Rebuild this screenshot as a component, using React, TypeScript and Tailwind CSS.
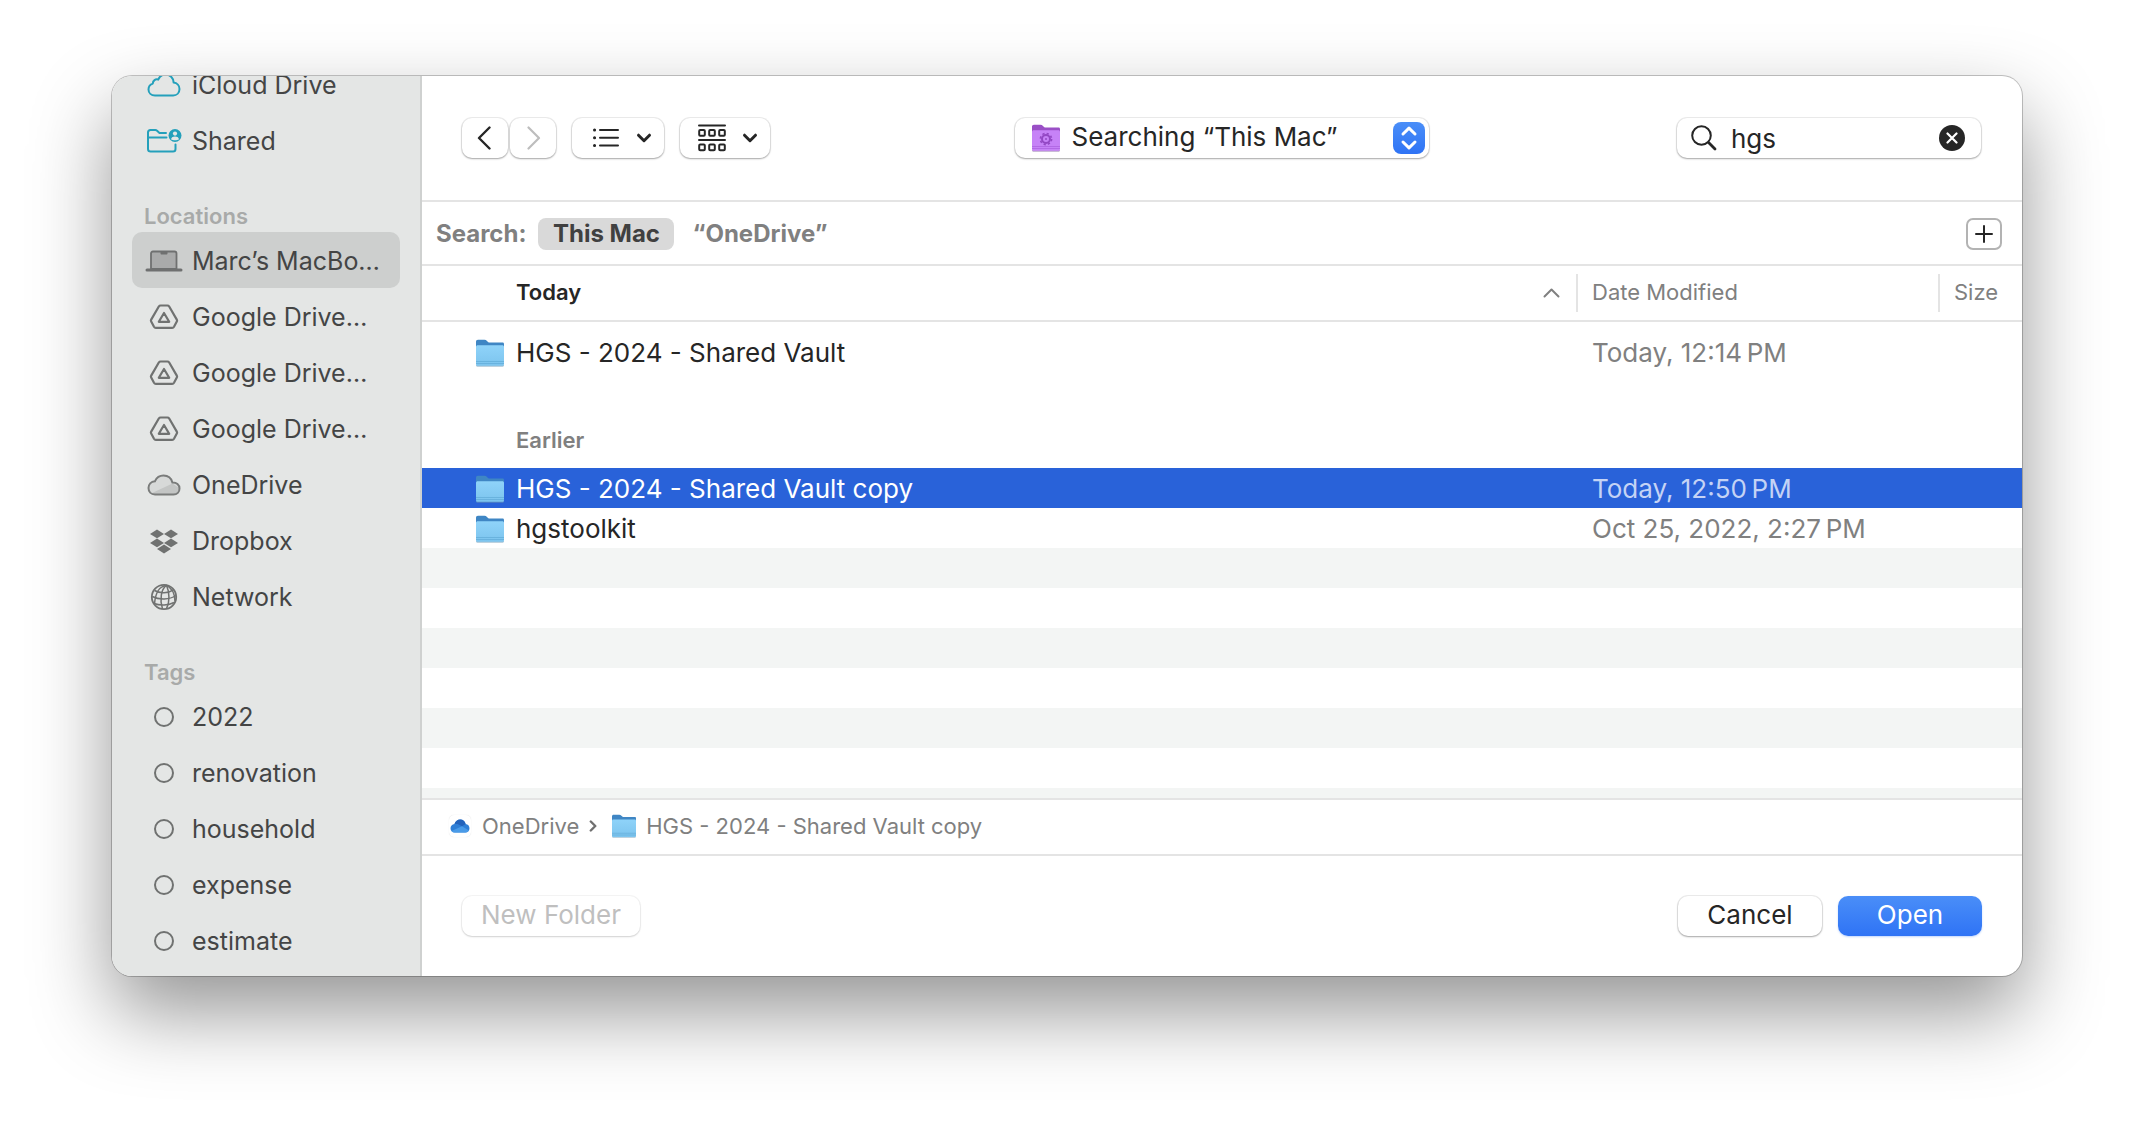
import { useId, useState } from "react";
import type { ReactNode } from "react";

type SidebarItem = { name: string; icon: ReactNode; active?: boolean };
type FileEntry = { name: string; modified: string };

function CloudOutline() {
  return (
    <svg width="34" height="24" viewBox="0 0 34 24" fill="none" stroke="#24a0bb" strokeWidth="2" strokeLinejoin="round">
      <path d="M8 22.5C4.300 22.500 1.500 20 1.500 16.500C1.500 13.500 3.500 11.300 5.800 10.600C5.800 7.600 8.600 5.600 11.200 6.600C12.600 3.300 15.300 1.500 18.500 1.500C23 1.500 26.500 5 26.600 9.600C30 10 32.500 12.600 32.500 16C32.500 19.800 29.800 22.500 26.200 22.500Z" />
    </svg>
  );
}

function SharedFolderIcon() {
  return (
    <svg width="36" height="26" viewBox="0 0 36 26" fill="none">
      <g stroke="#24a0bb" strokeWidth="2" strokeLinecap="round" strokeLinejoin="round">
        <path d="M20 5H13.500L10.800 2.500C10.400 2.100 9.900 2 9.300 2H4.500C2.800 2 2 3 2 4.500V21C2 22.800 3 23.500 4.700 23.500H27C28.700 23.500 29.500 22.700 29.500 21V16.500" />
        <path d="M2 9.500H20.500" />
      </g>
      <circle cx="29" cy="7.500" r="6.500" fill="#24a0bb" />
      <circle cx="29" cy="5.600" r="2.100" fill="#e4e6e5" />
      <path d="M25 11.200C25.500 9.300 27 8.600 29 8.600S32.500 9.300 33 11.200C31 12.700 27 12.700 25 11.200Z" fill="#e4e6e5" />
    </svg>
  );
}

function LaptopIcon() {
  return (
    <svg width="38" height="22" viewBox="0 0 38 22">
      <path d="M6 19V3.500C6 2.300 6.700 1.500 8 1.500H29.500C30.800 1.500 31.500 2.300 31.500 3.500V19Z" fill="#a9aaaa" stroke="#6f7070" strokeWidth="1.800" />
      <path d="M15.500 1.500H22.500V3.200C22.500 4.200 22 4.500 21.200 4.500H16.800C16 4.500 15.500 4.200 15.500 3.200Z" fill="#6f7070" />
      <rect x="0.500" y="18.500" width="37" height="3" rx="1.500" fill="#6f7070" />
    </svg>
  );
}

function DriveIcon() {
  return (
    <svg width="30" height="26" viewBox="0 0 30 26" fill="none" stroke="#707271" strokeWidth="2.200" strokeLinejoin="round">
      <path d="M11.600 1.500H18.400C19.200 1.500 19.800 1.900 20.200 2.500L27.800 15.600C28.200 16.300 28.200 17 27.800 17.600L25 22.800C24.600 23.500 24 23.900 23.200 23.900H6.800C6 23.900 5.400 23.500 5 22.800L2.200 17.600C1.800 17 1.800 16.300 2.200 15.600L9.800 2.500C10.200 1.900 10.800 1.500 11.600 1.500Z" />
      <path d="M15 9L20.200 17.800H9.800Z" />
    </svg>
  );
}

function OneDriveIcon() {
  return (
    <svg width="34" height="22" viewBox="0 0 34 22">
      <path d="M8 20.500C4 20.500 1.500 17.800 1.500 14C1.500 10.500 4 7.500 8 7.200C9.500 3.800 12.500 1.500 16.500 1.500C20.800 1.500 24.300 4.300 25.400 8.500C29.500 8.300 32.500 11 32.500 14.500C32.500 18 30 20.500 26.500 20.500Z" fill="#d7d9d8" />
      <path d="M4 19.500L25.500 9.500L32 14C32.300 18 29 20.500 26.500 20.500H8Z" fill="#c3c5c4" />
      <path d="M8 20.500C4 20.500 1.500 17.800 1.500 14C1.500 10.500 4 7.500 8 7.200C9.500 3.800 12.500 1.500 16.500 1.500C20.800 1.500 24.300 4.300 25.400 8.500C29.500 8.300 32.500 11 32.500 14.500C32.500 18 30 20.500 26.500 20.500Z" fill="none" stroke="#7a7c7b" strokeWidth="2" />
    </svg>
  );
}

function DropboxIcon() {
  return (
    <svg width="28" height="25" viewBox="0 0 28 25" fill="#707271">
      <path d="M7 0.500L14 4.900L7 9.300L0 4.900Z" />
      <path d="M21 0.500L28 4.900L21 9.300L14 4.900Z" />
      <path d="M7 9.500L14 13.900L7 18.300L0 13.900Z" />
      <path d="M21 9.500L28 13.900L21 18.300L14 13.900Z" />
      <path d="M14 15.600L21 20L14 24.400L7 20Z" />
    </svg>
  );
}

function GlobeIcon() {
  return (
    <svg width="28" height="28" viewBox="0 0 28 28" fill="none" stroke="#707271" strokeWidth="1.500">
      <circle cx="14" cy="14" r="12.200" strokeWidth="1.800" />
      <path d="M16.500 2.300C11 6 9.500 17 12.500 25.900" />
      <path d="M16.500 2.300C19.500 9 20 19 16.500 25.700" />
      <path d="M16.500 2.300C9 3.500 5.500 9 4.500 21" />
      <path d="M16.500 2.300C22 5 25 10.500 25 18.500" />
      <path d="M4.500 7.500C10 10.500 18 10.500 23.500 6.800" />
      <path d="M2.200 13.500C9 17 19.500 17 25.800 12.500" />
      <path d="M4 20.500C10 22.800 18.500 22.500 24 19.500" />
    </svg>
  );
}

function TagCircle() {
  return <span className="size-5 rounded-full border-2 border-[#707271]" />;
}

function FolderIcon({ small = false }: { small?: boolean }) {
  const id = useId();
  return (
    <svg className={small ? "h-6 w-[26px]" : "h-7 w-[30px]"} viewBox="0 0 30 28">
      <defs>
        <linearGradient id={id} x1="0" y1="0" x2="0" y2="1">
          <stop offset="0" stopColor="#8fd3f9" />
          <stop offset="1" stopColor="#7cc4ee" />
        </linearGradient>
      </defs>
      <path d="M1 3C1 1.500 1.700 0.800 3 0.800H9.500C10.500 0.800 11.200 1.200 12 2L13 3C13.500 3.400 14 3.600 15 3.600H27.500C28.600 3.600 29 4.200 29 5.200V14H1Z" fill="#3f86c4" />
      <path d="M1 26C1 27.300 1.800 27.800 3 27.800H27C28.200 27.800 29 27.300 29 26Z" fill="#6f9db9" opacity="0.600" />
      <path d="M1 8C1 6.800 1.700 6.300 2.800 6.300H27.200C28.300 6.300 29 6.800 29 8V25C29 26.300 28.400 26.800 27.200 26.800H2.800C1.600 26.800 1 26.300 1 25Z" fill={`url(#${id})`} />
      <path d="M1 22.500H29M1 24.500H29" stroke="#63add9" strokeWidth="0.800" />
    </svg>
  );
}

function SmartFolderIcon() {
  return (
    <svg width="30" height="28" viewBox="0 0 30 28">
      <path d="M1 3C1 1.500 1.700 0.800 3 0.800H9.500C10.500 0.800 11.200 1.200 12 2L13 3C13.500 3.400 14 3.600 15 3.600H27.500C28.600 3.600 29 4.200 29 5.200V14H1Z" fill="#9a4fc6" />
      <path d="M1 26C1 27.300 1.800 27.800 3 27.800H27C28.200 27.800 29 27.300 29 26Z" fill="#9a7fb0" opacity="0.700" />
      <path d="M1 8C1 6.800 1.700 6.300 2.800 6.300H27.200C28.300 6.300 29 6.800 29 8V25C29 26.300 28.400 26.800 27.200 26.800H2.800C1.600 26.800 1 26.300 1 25Z" fill="#c682f7" />
      <path d="M1 22.500H29M1 24.500H29" stroke="#ad63df" strokeWidth="0.800" />
      <circle cx="15" cy="15" r="4" fill="none" stroke="#9348c4" strokeWidth="2" />
      <circle cx="15" cy="15" r="5.600" fill="none" stroke="#9348c4" strokeWidth="1.600" strokeDasharray="2.200 2.198" />
      <circle cx="15" cy="15" r="1" fill="#9348c4" />
    </svg>
  );
}

function ChevronDown() {
  return (
    <svg width="16" height="10" viewBox="0 0 16 10" fill="none" stroke="#262626" strokeWidth="3" strokeLinecap="round" strokeLinejoin="round">
      <path d="M2.500 2.200L8 7.700L13.500 2.200" />
    </svg>
  );
}

const favorites: SidebarItem[] = [
  { name: "iCloud Drive", icon: <CloudOutline /> },
  { name: "Shared", icon: <SharedFolderIcon /> },
];

const locations: SidebarItem[] = [
  { name: "Marc’s MacBo…", icon: <LaptopIcon />, active: true },
  { name: "Google Drive…", icon: <DriveIcon /> },
  { name: "Google Drive…", icon: <DriveIcon /> },
  { name: "Google Drive…", icon: <DriveIcon /> },
  { name: "OneDrive", icon: <OneDriveIcon /> },
  { name: "Dropbox", icon: <DropboxIcon /> },
  { name: "Network", icon: <GlobeIcon /> },
];

const tags: SidebarItem[] = ["2022", "renovation", "household", "expense", "estimate"].map((name) => ({
  name,
  icon: <TagCircle />,
}));

const today: FileEntry[] = [{ name: "HGS - 2024 - Shared Vault", modified: "Today, 12:14\u202fPM" }];

const earlier: FileEntry[] = [
  { name: "HGS - 2024 - Shared Vault copy", modified: "Today, 12:50\u202fPM" },
  { name: "hgstoolkit", modified: "Oct 25, 2022, 2:27\u202fPM" },
];

const control =
  "flex h-10 items-center rounded-[10px] bg-white shadow-[0_0_0_1px_rgba(0,0,0,0.07),0_1px_2px_rgba(0,0,0,0.3)]";

function SidebarGroup({ title, items }: { title?: string; items: SidebarItem[] }) {
  return (
    <section>
      {title && <h2 className="mt-8 pl-3 text-[22px] leading-8 font-semibold text-[#a8aaa9]">{title}</h2>}
      <ul>
        {items.map((item, index) => (
          <li key={index}>
            <button
              type="button"
              className={`flex h-14 w-full items-center rounded-[10px] pt-0.5 pl-3 text-left ${item.active ? "bg-[#cdcfce]" : ""}`}
            >
              <span className="flex w-10 shrink-0 justify-center">{item.icon}</span>
              <span className="ml-2 whitespace-nowrap">{item.name}</span>
            </button>
          </li>
        ))}
      </ul>
    </section>
  );
}

function FileRow({ file, selected }: { file: FileEntry; selected: boolean }) {
  return (
    <tr className={`h-10 ${selected ? "bg-[#2962d9] text-white" : "text-[#262626]"}`}>
      <td className="p-0 pt-0.5 pl-[53px]">
        <div className="flex items-center gap-[11px]">
          <FolderIcon />
          {file.name}
        </div>
      </td>
      <td className={`p-0 pt-0.5 pl-4 ${selected ? "text-[#c4d3f5]" : "text-[#808080]"}`}>{file.modified}</td>
      <td className="p-0" />
    </tr>
  );
}

export default function App() {
  const [query, setQuery] = useState("hgs");
  const selected = "HGS - 2024 - Shared Vault copy";

  return (
    <div className="flex h-screen flex-col bg-white px-28 pt-[76px] pb-[148px] font-['Inter',sans-serif] text-[26px] leading-8">
      <div className="flex min-h-0 flex-1 overflow-hidden rounded-[20px] bg-white shadow-[0_0_0_1px_rgba(0,0,0,0.22),0_36px_80px_rgba(0,0,0,0.42)]">
        <nav aria-label="Sidebar" className="w-[310px] shrink-0 overflow-hidden border-r-2 border-[#cfd1d0] bg-[#e4e6e5] px-5 text-[25px] text-[#444545]">
          <div className="-mt-5">
            <SidebarGroup items={favorites} />
            <SidebarGroup title="Locations" items={locations} />
            <SidebarGroup title="Tags" items={tags} />
          </div>
        </nav>

        <main className="flex min-w-0 flex-1 flex-col">
          <header className="grid h-[126px] shrink-0 grid-cols-[1fr_auto_1fr] items-center border-b-2 border-[#e4e4e4] pr-[41px] pl-10">
            <div className="flex gap-4">
              <div className="flex gap-0.5">
                <button type="button" aria-label="Back" className={`${control} w-[46px] justify-center pr-0.5`}>
                  <svg width="14" height="24" viewBox="0 0 14 24" fill="none" stroke="#262626" strokeWidth="2.400" strokeLinecap="round" strokeLinejoin="round">
                    <path d="M12.500 1.500L2 12L12.500 22.500" />
                  </svg>
                </button>
                <button type="button" aria-label="Forward" disabled className={`${control} w-[46px] justify-center pl-0.5`}>
                  <svg width="14" height="24" viewBox="0 0 14 24" fill="none" stroke="#bdbdbd" strokeWidth="2.200" strokeLinecap="round" strokeLinejoin="round">
                    <path d="M1.500 1.500L12 12L1.500 22.500" />
                  </svg>
                </button>
              </div>
              <button type="button" aria-label="View as list" className={`${control} w-[92px] justify-center gap-4 pl-2`}>
                <svg width="28" height="20" viewBox="0 0 28 20" fill="none" stroke="#262626" strokeWidth="2" strokeLinecap="round">
                  <path d="M8 2H26M8 9.800H26M8 17.600H26" />
                  <path d="M2.500 2H2.600M2.500 9.800H2.600M2.500 17.600H2.600" strokeWidth="3" />
                </svg>
                <ChevronDown />
              </button>
              <button type="button" aria-label="Group items" className={`${control} w-[90px] justify-center gap-4 pl-1.5`}>
                <svg width="28" height="28" viewBox="0 0 28 28" fill="none" stroke="#262626" strokeWidth="2" strokeLinecap="round">
                  <path d="M1 1.500H27M1 16H27" />
                  <rect x="1.200" y="6" width="5.600" height="5.800" rx="1" />
                  <rect x="11.200" y="6" width="5.600" height="5.800" rx="1" />
                  <rect x="21.200" y="6" width="5.600" height="5.800" rx="1" />
                  <rect x="1.200" y="20.500" width="5.600" height="5.800" rx="1" />
                  <rect x="11.200" y="20.500" width="5.600" height="5.800" rx="1" />
                  <rect x="21.200" y="20.500" width="5.600" height="5.800" rx="1" />
                </svg>
                <ChevronDown />
              </button>
            </div>

            <div className={`${control} relative w-[414px]`}>
              <span className="pointer-events-none absolute left-4">
                <SmartFolderIcon />
              </span>
              <select aria-label="Location" className="h-10 w-full appearance-none rounded-[10px] bg-transparent pr-12 pb-0.5 pl-[57px] text-[#262626]">
                <option>Searching “This Mac”</option>
              </select>
              <span className="pointer-events-none absolute right-1 flex size-8 items-center justify-center rounded-lg bg-linear-to-b from-[#4a8ef8] to-[#2f73f5]">
                <svg width="18" height="26" viewBox="0 0 18 26" fill="none" stroke="#fff" strokeWidth="3" strokeLinecap="round" strokeLinejoin="round">
                  <path d="M3 9L9 3.200L15 9M3 17L9 22.800L15 17" />
                </svg>
              </span>
            </div>

            <div className={`${control} w-[304px] justify-self-end pr-4 pl-[14px]`}>
              <svg width="26" height="26" viewBox="0 0 26 26" fill="none" stroke="#262626" strokeLinecap="round" className="shrink-0">
                <circle cx="10.500" cy="10.500" r="9.300" strokeWidth="2" />
                <path d="M17.800 17.800L24 24" strokeWidth="2.800" />
              </svg>
              <input
                type="text"
                aria-label="Search"
                value={query}
                onChange={(event) => setQuery(event.target.value)}
                className="ml-[14px] h-10 min-w-0 flex-1 bg-transparent text-[#262626] outline-none"
              />
              <button type="button" aria-label="Clear search" onClick={() => setQuery("")} className="flex size-[26px] items-center justify-center rounded-full bg-[#262626]">
                <svg width="12" height="12" viewBox="0 0 12 12" stroke="#fff" strokeWidth="2.200" strokeLinecap="round">
                  <path d="M1.500 1.500L10.500 10.500M10.500 1.500L1.500 10.500" />
                </svg>
              </button>
            </div>
          </header>

          <div className="flex h-16 shrink-0 items-center border-b-2 border-[#e4e4e4] pt-0.5 pr-5 pl-[14px] text-[24px] font-bold text-[#808080]">
            <span>Search:</span>
            <button type="button" aria-pressed="true" className="ml-3 h-8 w-[136px] rounded-lg bg-[#d9d9d9] text-[#404040]">
              This Mac
            </button>
            <button type="button" aria-pressed="false" className="ml-[18px] h-8">
              “OneDrive”
            </button>
            <button type="button" aria-label="Add search rule" className="ml-auto flex h-8 w-9 items-center justify-center rounded-[7px] border-2 border-[#b3b3b3]">
              <svg width="18" height="18" viewBox="0 0 18 18" stroke="#262626" strokeWidth="2" strokeLinecap="round">
                <path d="M9 1V17M1 9H17" />
              </svg>
            </button>
          </div>

          <div className="flex min-h-0 flex-1 flex-col overflow-hidden">
            <table className="w-full shrink-0 table-fixed border-separate border-spacing-0">
              <colgroup>
                <col />
                <col className="w-[362px]" />
                <col className="w-[84px]" />
              </colgroup>
              <thead>
                <tr className="h-14 text-left text-[22px] text-[#808080]">
                  <th scope="col" aria-sort="ascending" className="border-b-2 border-[#e4e4e4] p-0 pr-4 pl-[94px] font-semibold text-[#262626]">
                    <div className="flex h-[38px] items-center justify-between">
                      <span className="pb-0.5">Today</span>
                      <svg width="17" height="10" viewBox="0 0 17 10" fill="none" stroke="#808080" strokeWidth="2" strokeLinecap="round" strokeLinejoin="round">
                        <path d="M1.500 8.500L8.500 1.500L15.500 8.500" />
                      </svg>
                    </div>
                  </th>
                  <th scope="col" className="border-b-2 border-[#e4e4e4] p-0 font-normal">
                    <div className="flex h-[38px] items-center border-l-2 border-[#e4e4e4] pb-0.5 pl-[14px]">Date Modified</div>
                  </th>
                  <th scope="col" className="border-b-2 border-[#e4e4e4] p-0 font-normal">
                    <div className="flex h-[38px] items-center border-l-2 border-[#e4e4e4] pb-0.5 pl-[14px]">Size</div>
                  </th>
                </tr>
              </thead>
              <tbody>
                <tr className="h-[10px]">
                  <td colSpan={3} className="p-0" />
                </tr>
                {today.map((file) => (
                  <FileRow key={file.name} file={file} selected={file.name === selected} />
                ))}
              </tbody>
              <tbody>
                <tr className="h-24">
                  <th scope="rowgroup" colSpan={3} className="p-0 pt-10 pl-[94px] text-left text-[22px] font-semibold text-[#808080]">
                    Earlier
                  </th>
                </tr>
                {earlier.map((file) => (
                  <FileRow key={file.name} file={file} selected={file.name === selected} />
                ))}
              </tbody>
            </table>
            <div className="flex-1 bg-[repeating-linear-gradient(to_bottom,#f3f5f4_0px,#f3f5f4_40px,#ffffff_40px,#ffffff_80px)]" />
          </div>

          <div className="flex h-[58px] shrink-0 items-center border-y-2 border-[#e4e4e4] pb-0.5 pl-[27px] text-[22px] text-[#808080]">
            <button type="button" className="flex items-center gap-[11px]">
              <span className="flex size-[22px] items-center justify-center rounded-[5px] bg-white shadow-[0_0_1px_rgba(0,0,0,0.15)]">
                <svg width="20" height="14" viewBox="0 0 20 14">
                  <path d="M5 13.500C2.200 13.500 0.500 11.800 0.500 9.300C0.500 7 2 5.200 4.500 4.900C5.500 2.200 7.500 0.500 10.200 0.500C13 0.500 15 2.200 15.600 4.900C18 5 19.500 6.800 19.500 9.200C19.500 11.800 17.800 13.500 15.300 13.500Z" fill="#2f7fd6" />
                  <path d="M4.500 4.900C5.500 2.200 7.500 0.500 10.200 0.500C13 0.500 15 2.200 15.600 4.900L12 7.200L7.500 4.900Z" fill="#2463bb" />
                  <path d="M1.500 12L12 7.200L19 11.500C18.200 12.800 17 13.500 15.300 13.500H5C3.500 13.500 2.200 13 1.500 12Z" fill="#4a9be8" />
                </svg>
              </span>
              OneDrive
            </button>
            <svg width="8" height="12" viewBox="0 0 8 12" fill="none" stroke="#707070" strokeWidth="2.400" strokeLinecap="round" strokeLinejoin="round" className="mr-[14px] ml-[10px]">
              <path d="M1.800 1.500L6.300 6L1.800 10.500" />
            </svg>
            <button type="button" className="flex items-center gap-[9px]">
              <FolderIcon small />
              HGS - 2024 - Shared Vault copy
            </button>
          </div>

          <footer className="flex h-[120px] shrink-0 items-center gap-4 pr-10 pl-10">
            <button type="button" disabled className="h-10 w-[178px] rounded-[10px] bg-white pb-0.5 text-[#bfbfbf] shadow-[0_0_0_1px_rgba(0,0,0,0.04),0_1px_2px_rgba(0,0,0,0.15)]">
              New Folder
            </button>
            <button type="button" className={`${control} ml-auto w-36 justify-center pb-0.5 text-[#262626]`}>
              Cancel
            </button>
            <button type="button" className="h-10 w-36 rounded-[10px] bg-linear-to-b from-[#4a8ef8] to-[#2f73f5] pb-0.5 text-white shadow-[0_1px_2px_rgba(47,115,245,0.3)]">
              Open
            </button>
          </footer>
        </main>
      </div>
    </div>
  );
}
